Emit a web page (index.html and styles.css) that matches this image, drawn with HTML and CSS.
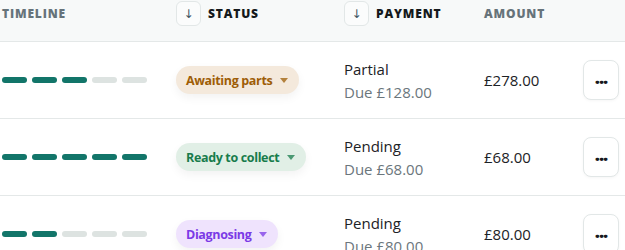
FILE: index.html
```html
<!DOCTYPE html>
<html>
<head>
<meta charset="utf-8">
<link rel="stylesheet" href="styles.css">
</head>
<body>
<div class="table">
  <div class="row head">
    <div class="hcell"><span class="hlabel muted">Timeline</span></div>
    <div class="hcell"><span class="sort">↓</span><span class="hlabel">Status</span></div>
    <div class="hcell"><span class="sort">↓</span><span class="hlabel">Payment</span></div>
    <div class="hcell"><span class="hlabel muted">Amount</span></div>
    <div class="hcell"></div>
  </div>

  <div class="row">
    <div class="timeline"><span class="dash on"></span><span class="dash on"></span><span class="dash on"></span><span class="dash"></span><span class="dash"></span></div>
    <div class="cell"><span class="badge amber">Awaiting parts<span class="caret"></span></span></div>
    <div class="pay"><span class="pay-main">Partial</span><span class="pay-due">Due £128.00</span></div>
    <div class="amount">£278.00</div>
    <div class="cell"><button class="more">...</button></div>
  </div>

  <div class="row">
    <div class="timeline"><span class="dash on"></span><span class="dash on"></span><span class="dash on"></span><span class="dash on"></span><span class="dash on"></span></div>
    <div class="cell"><span class="badge green">Ready to collect<span class="caret"></span></span></div>
    <div class="pay"><span class="pay-main">Pending</span><span class="pay-due">Due £68.00</span></div>
    <div class="amount">£68.00</div>
    <div class="cell"><button class="more">...</button></div>
  </div>

  <div class="row">
    <div class="timeline"><span class="dash on"></span><span class="dash on"></span><span class="dash"></span><span class="dash"></span><span class="dash"></span></div>
    <div class="cell"><span class="badge violet">Diagnosing<span class="caret"></span></span></div>
    <div class="pay"><span class="pay-main">Pending</span><span class="pay-due">Due £80.00</span></div>
    <div class="amount">£80.00</div>
    <div class="cell"><button class="more">...</button></div>
  </div>
</div>
</body>
</html>
```

FILE: styles.css
```css
html, body {
  margin: 0;
  padding: 0;
  background: #ffffff;
  font-family: "Open Sans", "Noto Sans", sans-serif;
  color: #1c2226;
  overflow: hidden;
}

.table {
  width: 625px;
}

.row {
  display: grid;
  grid-template-columns: 174px 168px 140px 99px 36px;
  padding-left: 2px;
  height: 76px;
  align-items: center;
  border-bottom: 1px solid #e4e8e8;
}

.row.head {
  height: 40px;
  padding-top: 1px;
  align-items: start;
  background: #f7f9f9;
}

.hcell {
  display: flex;
  align-items: center;
  height: 25px;
  gap: 7px;
}

.hlabel {
  font-size: 12px;
  font-weight: 800;
  letter-spacing: 0.07em;
  text-transform: uppercase;
  color: #15191c;
}

.hlabel.muted {
  color: #66737a;
}

.sort {
  box-sizing: border-box;
  width: 25px;
  height: 25px;
  border: 1px solid #e2e7e7;
  border-radius: 6px;
  background: #fbfcfc;
  display: flex;
  align-items: center;
  justify-content: center;
  font-size: 12px;
  color: #3f5462;
  font-family: "DejaVu Sans", sans-serif;
}

.timeline {
  display: flex;
  gap: 5px;
}

.dash {
  width: 25px;
  height: 6px;
  border-radius: 3px;
  background: #dde3e1;
}

.dash.on {
  background: #127569;
}

.cell {
  display: flex;
  align-items: center;
}

.badge {
  display: inline-flex;
  align-items: center;
  height: 28px;
  padding: 0 11px 0 10px;
  border-radius: 14px;
  font-size: 12.5px;
  font-weight: 700;
  letter-spacing: -0.35px;
  box-shadow: 0 4px 10px rgba(0, 0, 0, 0.05);
}

.caret {
  width: 0;
  height: 0;
  margin-left: 8px;
  border-left: 4px solid transparent;
  border-right: 4px solid transparent;
  border-top: 5px solid currentColor;
  opacity: 0.75;
}

.badge.amber {
  background: #f4e9dc;
  color: #9e5d07;
}

.badge.green {
  background: #e1efe6;
  color: #187c4c;
}

.badge.violet {
  background: #efe3fd;
  color: #7b3ae6;
}

.pay {
  display: flex;
  flex-direction: column;
  gap: 3px;
  font-size: 15px;
  line-height: 20px;
}

.pay-main {
  color: #1c2226;
}

.pay-due {
  color: #6b767c;
}

.amount {
  font-size: 15px;
  color: #1c2226;
}

.more {
  box-sizing: border-box;
  width: 36px;
  height: 40px;
  border: 1px solid #e2e7e7;
  border-radius: 8px;
  background: #ffffff;
  box-shadow: 0 1px 3px rgba(0, 0, 0, 0.04);
  font-family: "Open Sans", sans-serif;
  font-weight: 800;
  font-size: 18px;
  letter-spacing: -1px;
  line-height: 1;
  color: #15191c;
  padding: 0 0 6px 0;
  display: flex;
  align-items: center;
  justify-content: center;
}
```
